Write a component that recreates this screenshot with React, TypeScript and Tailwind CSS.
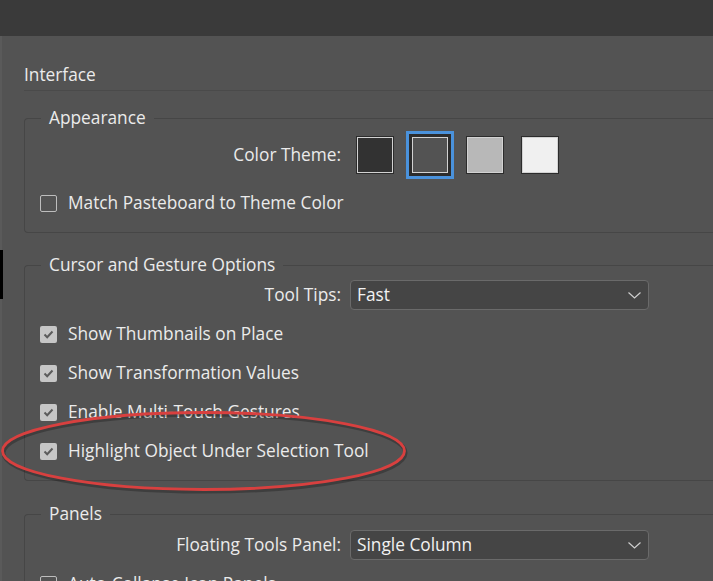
import React from "react";

const font = { fontFamily: '"Open Sans", "Noto Sans", sans-serif' };

function Check({ checked, label }: { checked?: boolean; label: string }) {
  return (
    <div className="flex h-[30px] items-center pl-[15px]">
      {checked ? (
        <span className="flex h-[17px] w-[17px] items-center justify-center rounded-[2px] bg-[#c6c6c6]">
          <svg width="11" height="9" viewBox="0 0 11 9" fill="none">
            <path d="M1.5 4.5 L4.2 7.2 L9.5 1.5" stroke="#5b5b5b" strokeWidth="2" />
          </svg>
        </span>
      ) : (
        <span className="h-[17px] w-[17px] rounded-[2px] border border-[#bdbdbd]" />
      )}
      <span className="ml-[11px]">{label}</span>
    </div>
  );
}

function Select({ value }: { value: string }) {
  return (
    <div className="flex h-[30px] w-[299px] items-center justify-between rounded-[4px] border-[1.5px] border-[#6a6a6a] bg-[#454545] pl-[6px] pr-[7px] text-[#f2f2f2]">
      <span>{value}</span>
      <svg width="13" height="7" viewBox="0 0 13 7" fill="none">
        <path d="M0.5 0.5 L6.5 6 L12.5 0.5" stroke="#cfcfcf" strokeWidth="1.2" />
      </svg>
    </div>
  );
}

function LabelRow({ label, children, h }: { label: string; children: React.ReactNode; h: string }) {
  return (
    <div className={`flex items-center ${h}`}>
      <div className="w-[316px] whitespace-nowrap text-right">{label}</div>
      <div className="ml-[9px]">{children}</div>
    </div>
  );
}

function Group({ title, children, className }: { title: string; children: React.ReactNode; className?: string }) {
  return (
    <fieldset className={`mr-[-20px] rounded-l-[4px] border-y border-l border-[#464646] pb-[14px] ${className ?? ""}`}>
      <legend className="ml-[16px] px-[8px] leading-[22px]">{title}</legend>
      {children}
    </fieldset>
  );
}

function Swatch({ fill, selected }: { fill: string; selected?: boolean }) {
  return (
    <div
      className={`h-[38px] w-[38px] border border-[#2c2c2c] ${
        selected ? "outline-[2px] outline-solid outline-[#2c2c2c] shadow-[0_0_0_5px_#4a92dc]" : ""
      }`}
    >
      <div className="h-full w-full border border-[#d2d2d2]" style={{ background: fill }} />
    </div>
  );
}

export default function App() {
  return (
    <div className="relative h-[581px] w-[713px] overflow-hidden bg-[#535353] text-[17.3px] text-[#ebebeb]" style={font}>
      <div className="h-[36px] bg-[#3a3a3a]" />
      <div className="border-l-[2px] border-[#5a5a5a] pl-[22px] pt-[28px]">
        <div className="h-[27px] border-b border-[#4a4a4a] leading-[22px]">Interface</div>

        <Group title="Appearance" className="mt-[16px]">
          <div className="pt-[2px]">
            <LabelRow label="Color Theme:" h="h-[48px]">
              <div className="ml-[6px] flex gap-[17px]">
                <Swatch fill="#323232" />
                <Swatch fill="#535353" selected />
                <Swatch fill="#b8b8b8" />
                <Swatch fill="#f0f0f0" />
              </div>
            </LabelRow>
            <div className="mt-[9px]">
              <Check label="Match Pasteboard to Theme Color" />
            </div>
          </div>
        </Group>

        <Group title="Cursor and Gesture Options" className="mt-[21px]">
          <div className="flex flex-col gap-[9px] pt-[4px]">
            <LabelRow label="Tool Tips:" h="h-[30px]">
              <Select value="Fast" />
            </LabelRow>
            <Check checked label="Show Thumbnails on Place" />
            <Check checked label="Show Transformation Values" />
            <Check checked label="Enable Multi-Touch Gestures" />
            <Check checked label="Highlight Object Under Selection Tool" />
          </div>
        </Group>

        <Group title="Panels" className="mt-[22px]">
          <div className="flex flex-col gap-[9px] pt-[5px]">
            <LabelRow label="Floating Tools Panel:" h="h-[30px]">
              <Select value="Single Column" />
            </LabelRow>
            <Check label="Auto-Collapse Icon Panels" />
          </div>
        </Group>
      </div>

      <div className="absolute left-0 top-[250px] h-[49px] w-[3px] bg-black" />

      <svg className="pointer-events-none absolute left-0 top-0" width="713" height="581">
        <ellipse cx="203.5" cy="451" rx="201" ry="38.5" fill="none" stroke="rgba(0,0,0,0.25)" strokeWidth="4" transform="translate(1 2)" />
        <ellipse cx="203.5" cy="451" rx="201" ry="38.5" fill="none" stroke="#d8403f" strokeWidth="2.8" />
      </svg>
    </div>
  );
}
